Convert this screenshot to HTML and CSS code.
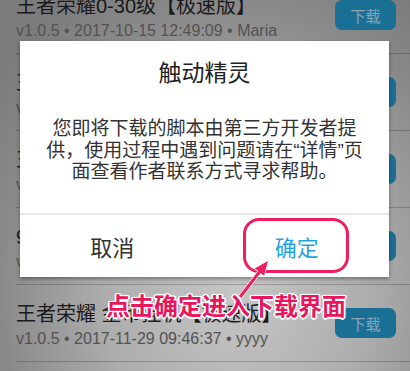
FILE: index.html
```html
<!DOCTYPE html>
<html lang="zh-CN">
<head>
<meta charset="utf-8">
<title>触动精灵</title>
<link rel="stylesheet" href="styles.css">
</head>
<body>
<div class="screen">
  <ul class="list">
    <li class="row">
      <div class="info">
        <div class="title">王者荣耀0-30级【极速版】</div>
        <div class="meta">v1.0.5 • 2017-10-15 12:49:09 • Maria</div>
      </div>
      <span class="dl">下载</span>
    </li>
    <li class="row">
      <div class="info">
        <div class="title">王者荣耀自动刷金币</div>
        <div class="meta">v1.0.3 • 2017-10-20 10:12:33 • Leo</div>
      </div>
      <span class="dl">下载</span>
    </li>
    <li class="row">
      <div class="info">
        <div class="title">王者荣耀冒险模式挂机</div>
        <div class="meta">v1.0.2 • 2017-11-02 18:20:41 • Kim</div>
      </div>
      <span class="dl">下载</span>
    </li>
    <li class="row">
      <div class="info">
        <div class="title">9级快速升级脚本</div>
        <div class="meta">v1.0.1 • 2017-11-18 21:05:17 • Tom</div>
      </div>
      <span class="dl">下载</span>
    </li>
    <li class="row">
      <div class="info">
        <div class="title">王者荣耀 金币挂机【极速版】</div>
        <div class="meta">v1.0.5 • 2017-11-29 09:46:37 • yyyy</div>
      </div>
      <span class="dl">下载</span>
    </li>
    <li class="row">
      <div class="info">
        <div class="title">王者荣耀日常任务</div>
        <div class="meta">v1.0.0 • 2017-12-01 08:30:00 • Ann</div>
      </div>
      <span class="dl">下载</span>
    </li>
  </ul>

  <div class="dialog">
    <div class="dlg-title">触动精灵</div>
    <p class="dlg-msg">您即将下载的脚本由第三方开发者提<br>供，使用过程中遇到问题请在“详情”页<br>面查看作者联系方式寻求帮助。</p>
    <div class="dlg-actions">
      <span class="dlg-btn cancel">取消</span>
      <span class="dlg-btn ok">确定</span>
    </div>
  </div>

  <div class="mark-box"></div>
  <svg class="mark-arrow" width="50" height="55" viewBox="0 0 50 55">
    <polygon points="8.8,46.1 28.2,21.1 24.7,18.4 38,11 34.1,25.7 30.6,23 11.2,47.9" fill="#ee1f5f" stroke="#ffffff" stroke-width="1.5" stroke-linejoin="round" paint-order="stroke"/>
  </svg>
  <div class="mark-text">点击确定进入下载界面</div>
</div>
</body>
</html>
```

FILE: styles.css
```css
* {
  box-sizing: border-box;
  margin: 0;
  padding: 0;
}

html, body {
  width: 410px;
  height: 371px;
  overflow: hidden;
}

body {
  font-family: "Liberation Sans", "Noto Sans CJK SC", sans-serif;
  background: radial-gradient(ellipse 72% 95% at 58% 78%, #c6c6c6 0%, #adadad 45%, #8a8a8a 80%, #7c7c7c 100%);
}

.screen {
  position: relative;
  width: 410px;
  height: 371px;
  overflow: hidden;
}

.list {
  list-style: none;
  margin-top: -23px;
}

.row {
  display: flex;
  align-items: flex-start;
  height: 77px;
  margin-left: 16px;
  padding-top: 16px;
  padding-right: 14px;
  border-bottom: 1px solid rgba(0, 0, 0, 0.2);
}

.info {
  flex: 1;
  min-width: 0;
}

.title {
  font-size: 20px;
  line-height: 26px;
  color: #1a1a1a;
  white-space: nowrap;
}

.meta {
  margin-top: 1px;
  font-size: 16px;
  line-height: 22px;
  color: #525252;
  white-space: nowrap;
}

.dl {
  display: flex;
  align-items: center;
  justify-content: center;
  width: 61px;
  height: 30px;
  margin-top: 7px;
  border-radius: 7px;
  background: #1a6f95;
  color: #8aa6b5;
  font-size: 15px;
}

.dialog {
  position: absolute;
  left: 20px;
  top: 41px;
  width: 369px;
  background: #ffffff;
  box-shadow: 0 2px 4px rgba(0, 0, 0, 0.35);
}

.dlg-title {
  padding-top: 17px;
  font-size: 23px;
  line-height: 30px;
  color: #222222;
  text-align: center;
}

.dlg-msg {
  padding: 30px 0 30.5px;
  font-size: 19px;
  line-height: 21.5px;
  color: #333333;
  text-align: center;
}

.dlg-actions {
  display: grid;
  grid-template-columns: 1fr 1fr;
  height: 64px;
  border-top: 2px solid #e6e6e6;
}

.dlg-btn {
  display: flex;
  align-items: center;
  justify-content: center;
  font-size: 22px;
}

.cancel {
  color: #333333;
}

.ok {
  color: #1fa5e3;
}

.mark-box {
  position: absolute;
  left: 243px;
  top: 218px;
  width: 106px;
  height: 55px;
  border: 3px solid #ee1f5f;
  border-radius: 16px;
}

.mark-arrow {
  position: absolute;
  left: 230px;
  top: 250px;
}

.mark-text {
  position: absolute;
  left: 106px;
  top: 292px;
  font-size: 24px;
  line-height: 30px;
  font-weight: 700;
  color: #e8175d;
  white-space: nowrap;
  text-shadow:
    1.5px 0 0 #fff, -1.5px 0 0 #fff, 0 1.5px 0 #fff, 0 -1.5px 0 #fff,
    1px 1px 0 #fff, -1px -1px 0 #fff, 1px -1px 0 #fff, -1px 1px 0 #fff,
    0 0 3px #fff;
}
```
